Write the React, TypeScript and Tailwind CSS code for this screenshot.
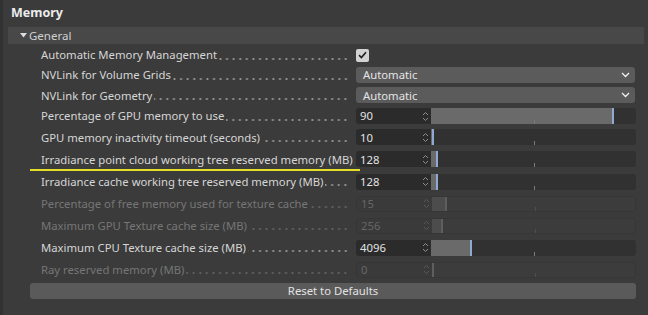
import { ReactNode } from "react";

type Row = {
  label: string;
  kind: "check" | "select" | "num";
  value?: string;
  fill?: number;
  disabled?: boolean;
  highlight?: boolean;
  h: string;
};

const rows: Row[] = [
  { label: "Automatic Memory Management", kind: "check", h: "h-[20px]" },
  { label: "NVLink for Volume Grids", kind: "select", value: "Automatic", h: "h-[20px]" },
  { label: "NVLink for Geometry", kind: "select", value: "Automatic", h: "h-[20.5px]" },
  { label: "Percentage of GPU memory to use", kind: "num", value: "90", fill: 181, h: "h-[21px]" },
  {
    label: "GPU memory inactivity timeout (seconds)",
    kind: "num",
    value: "10",
    fill: 1,
    h: "h-[21.5px]",
  },
  {
    label: "Irradiance point cloud working tree reserved memory (MB)",
    kind: "num",
    value: "128",
    fill: 5,
    highlight: true,
    h: "h-[22.5px]",
  },
  {
    label: "Irradiance cache working tree reserved memory (MB)",
    kind: "num",
    value: "128",
    fill: 5,
    h: "h-[22px]",
  },
  {
    label: "Percentage of free memory used for texture cache",
    kind: "num",
    value: "15",
    fill: 13,
    disabled: true,
    h: "h-[22px]",
  },
  {
    label: "Maximum GPU Texture cache size (MB)",
    kind: "num",
    value: "256",
    fill: 9,
    disabled: true,
    h: "h-[22px]",
  },
  { label: "Maximum CPU Texture cache size (MB)", kind: "num", value: "4096", fill: 39, h: "h-[22px]" },
  { label: "Ray reserved memory (MB)", kind: "num", value: "0", fill: 0, disabled: true, h: "h-[22px]" },
];

function Spinner({ dim }: { dim?: boolean }) {
  const c = dim ? "#585858" : "#8c8c8c";
  return (
    <svg width="7" height="13" viewBox="0 0 7 13" fill="none">
      <path d="M1 5 L3.5 2.5 L6 5" stroke={c} strokeWidth="1" />
      <path d="M1 8 L3.5 10.5 L6 8" stroke={c} strokeWidth="1" />
    </svg>
  );
}

function NumField({ row }: { row: Row }) {
  const dim = row.disabled;
  return (
    <div
      className={`flex h-4 w-[280px] overflow-hidden rounded-[3px] ${
        dim ? "border border-[#363636]" : ""
      }`}
    >
      <div
        className={`flex w-[75px] items-center justify-between pl-[4px] pr-[2px] ${
          dim ? "bg-[#3a3a3a] text-[#666]" : "bg-[#2b2b2b] text-[#e2e2e2]"
        }`}
      >
        <span>{row.value}</span>
        <Spinner dim={dim} />
      </div>
      <div className={`relative flex-1 ${dim ? "bg-[#3c3c3c]" : "bg-[#313131]"}`}>
        <div
          className={`absolute top-0 bottom-0 left-0 ${dim ? "bg-[#4c4c4c]" : "bg-[#6a6a6a]"}`}
          style={{ width: row.fill }}
        />
        <div
          className={`absolute top-0 bottom-0 w-[2px] ${dim ? "bg-[#5e5e5e]" : "bg-[#8fa9d4]"}`}
          style={{ left: row.fill }}
        />
        <div
          className={`absolute bottom-0 left-[103px] h-[4px] w-px ${
            dim ? "bg-[#4e4e4e]" : "bg-[#7a7a7a]"
          }`}
        />
      </div>
    </div>
  );
}

function Control({ row }: { row: Row }): ReactNode {
  if (row.kind === "check") {
    return (
      <div className="flex h-[13px] w-[13px] items-center justify-center rounded-[2px] bg-[#d2d2d2]">
        <svg width="9" height="8" viewBox="0 0 9 8" fill="none">
          <path d="M1 4.2 L3.4 6.5 L8 1.2" stroke="#1e1e1e" strokeWidth="1.6" />
        </svg>
      </div>
    );
  }
  if (row.kind === "select") {
    return (
      <div className="flex h-4 w-[279px] items-center justify-between rounded-[3px] bg-[#5b5b5b] pl-[7px] pr-[5px] text-[#e4e4e4]">
        <span>{row.value}</span>
        <svg width="9" height="6" viewBox="0 0 9 6" fill="none">
          <path d="M1 1 L4.5 4.5 L8 1" stroke="#f0f0f0" strokeWidth="1.3" />
        </svg>
      </div>
    );
  }
  return <NumField row={row} />;
}

function App() {
  return (
    <div className="relative h-[315px] w-[648px] overflow-hidden border-l-[3px] border-[#313131] bg-[#3b3b3b] font-['Noto_Sans',sans-serif] text-[11.3px] leading-none">
      <div className="flex h-[27px] items-center pl-[8px] text-[12.5px] font-bold text-[#ececec]">
        Memory
      </div>
      <div className="ml-[5px] mr-[4px] flex h-[17px] items-center bg-[#484848] pl-[12px] text-[11.5px] text-[#d0d0d0]">
        <svg width="7" height="5" viewBox="0 0 7 5" className="mr-[2px]">
          <path d="M0 0 L7 0 L3.5 4.5 Z" fill="#dcdcdc" />
        </svg>
        General
      </div>
      <div className="mt-[1px] flex flex-col">
        {rows.map((row) => (
          <div key={row.label} className={`relative flex items-center pl-[38px] ${row.h}`}>
            <div
              className={`flex w-[311px] items-center whitespace-nowrap ${
                row.disabled ? "text-[#767676]" : "text-[#d6d6d6]"
              }`}
            >
              <span>{row.label}</span>
              <div
                className={`ml-[2px] mr-[3px] mt-[8px] h-[2px] flex-1 bg-right bg-repeat-x bg-[length:6.6px_2px] ${
                  row.disabled
                    ? "bg-[radial-gradient(circle,#626262_0.9px,transparent_1.2px)]"
                    : "bg-[radial-gradient(circle,#969696_0.9px,transparent_1.2px)]"
                }`}
              />
            </div>
            <div className="ml-[4px]">
              <Control row={row} />
            </div>
            {row.highlight && (
              <div className="absolute bottom-0 left-[27px] h-[2px] w-[330px] bg-[#e5de27]" />
            )}
          </div>
        ))}
      </div>
      <div className="ml-[27px] mr-[12px] mt-[2.5px] flex h-[16px] items-center justify-center rounded-[3px] bg-[#5a5a5a] text-[#e2e2e2]">
        Reset to Defaults
      </div>
    </div>
  );
}

export default App;
